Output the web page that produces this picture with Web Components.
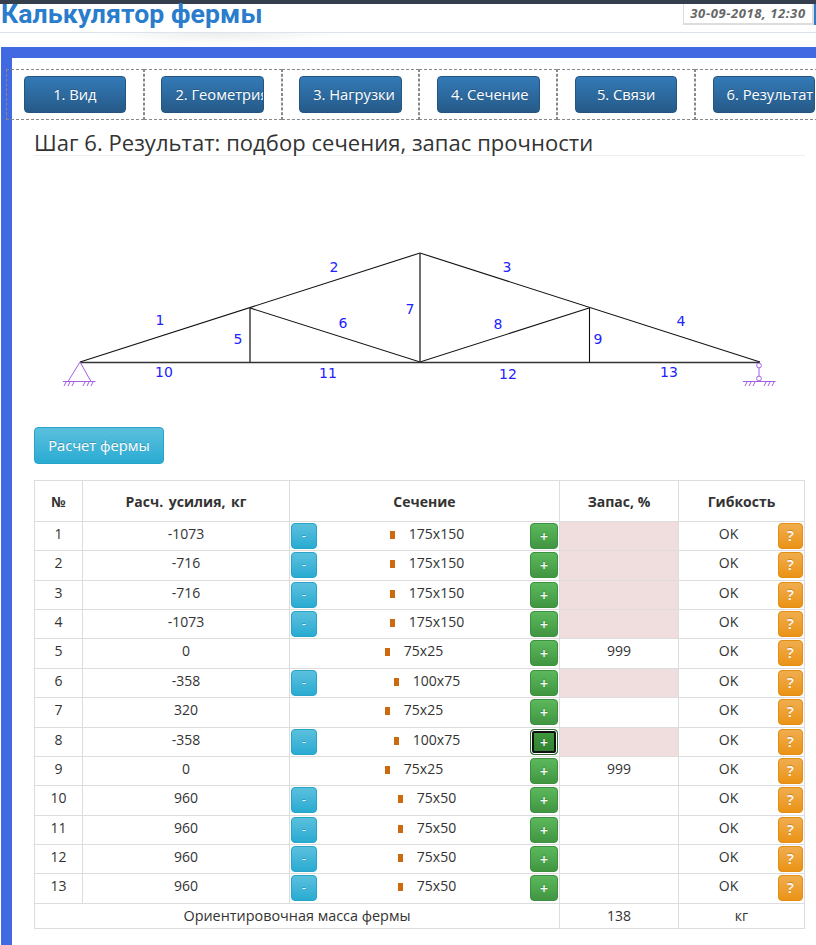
<!DOCTYPE html>
<html lang="ru"><head><meta charset="utf-8"><title>Калькулятор фермы</title>
<style>
html,body{margin:0;padding:0;background:#fff;overflow:hidden;width:816px;height:945px}
body{font-family:"Open Sans","Noto Sans",sans-serif;color:#333}
</style></head><body>
<app-header title-text="Калькулятор фермы" date="30-09-2018, 12:30"></app-header>
<work-frame>
  <step-tabs>
    <step-tab>1. Вид</step-tab><step-tab>2. Геометрия</step-tab><step-tab>3. Нагрузки</step-tab>
    <step-tab>4. Сечение</step-tab><step-tab>5. Связи</step-tab><step-tab>6. Результат</step-tab>
  </step-tabs>
  <step-title>Шаг 6. Результат: подбор сечения, запас прочности</step-title>
  <truss-diagram></truss-diagram>
  <app-btn kind="info" size="large">Расчет фермы</app-btn>
  <truss-table></truss-table>
</work-frame>
<script>
const FONT='"Open Sans","Noto Sans",sans-serif';
function def(name,css,html,extra){
  customElements.define(name,class extends HTMLElement{
    constructor(){super();this.attachShadow({mode:'open'}).innerHTML='<style>'+css+'</style>'+html;}
    connectedCallback(){if(extra)extra(this);}
  });
}
def('app-header',`
:host{display:block;height:47px;box-sizing:border-box;font-family:${FONT}}
.dark{height:4px;background:#353e4c}
.row{display:flex;justify-content:space-between;align-items:flex-start;height:28px;border-bottom:1px solid #dde3ea}
h1{margin:0 0 0 1px;font:700 26.6px/20px Roboto,sans-serif;letter-spacing:.1px;color:#2a7ccc;white-space:nowrap}
.date{box-sizing:border-box;height:21px;width:131px;margin:0 2px 0 0;border:1px solid #ddd;border-top:0;border-width:0 2px 2px 1px;font:italic 700 13px/18px ${FONT};letter-spacing:.6px;color:#666;text-align:center;box-shadow:2px 0 0 #2a7ccc}
.shade{height:14px;background:radial-gradient(ellipse 130px 12px at 220px 0,rgba(0,0,0,.07),rgba(0,0,0,0))}`,
`<div class="dark"></div><div class="row"><h1></h1><div class="date"></div></div><div class="shade"></div>`,
el=>{el.shadowRoot.querySelector('h1').textContent=el.getAttribute('title-text');el.shadowRoot.querySelector('.date').textContent=el.getAttribute('date');});
def('work-frame',`
:host{display:block;margin-left:1px;border-top:11px solid #4169e1;border-left:11px solid #4169e1;height:898px;padding-top:11px;box-sizing:border-box;font-family:${FONT}}`,`<slot></slot>`);
def('step-tabs',`
:host{display:flex;margin-left:-6px;width:830px;height:51px}`,`<slot></slot>`);
def('step-tab',`
:host{display:flex;flex:0 0 137.8px;box-sizing:border-box;border:1px dashed #888;padding:6px 0 0 16.6px}
.b{box-sizing:border-box;flex:none;width:102.6px;height:37px;border:1px solid #245580;border-radius:4px;background:linear-gradient(#337ab7,#265a88);color:#fff;font-size:14.7px;line-height:34px;padding:0 13px;text-align:center;white-space:nowrap;overflow:hidden;text-shadow:0 -1px 0 rgba(0,0,0,.2)}`,
`<div class="b"><slot></slot></div>`);
def('step-title',`
:host{display:block;margin:8px 0 0 22px;width:771px;box-sizing:border-box;border-bottom:1px solid #eee;height:28px;font-size:22px;line-height:28px;letter-spacing:.04px;color:#333;white-space:nowrap}`,`<slot></slot>`);
def('app-btn',`
:host{display:block;box-sizing:border-box;border:1px solid;border-radius:4px;color:#fff;text-align:center;white-space:nowrap;width:26px;height:26px;font-size:12px;line-height:24px;flex:none;text-shadow:0 -1px 0 rgba(0,0,0,.2)}
:host([kind=info]){background:linear-gradient(#5bc0de,#2aabd2);border-color:#28a4c9}
:host([kind=success]){background:linear-gradient(#5cb85c,#419641);border-color:#3e8f3e;width:28px;font-size:14px;line-height:25px;font-weight:600}
:host([kind=warning]){background:linear-gradient(#f0ad4e,#eb9316);border-color:#e38d13;width:25px;font-size:15px;font-weight:600;line-height:23px}
:host([size=large]){width:130px;height:37px;font-size:14.7px;line-height:34px;margin-left:22px}
:host([focused]){border-color:#2d6a2d;box-shadow:inset 0 0 0 1px #fff,inset 0 0 0 3px #111;background:linear-gradient(#3f9a3f,#2f7f2f)}`,`<slot></slot>`);
def('truss-diagram',`
:host{display:block;margin:0 0 0 22px;width:771px;height:271px}
svg{display:block}
text{font:14px "DejaVu Sans",sans-serif;fill:#2222ff;text-anchor:middle}`,
`<svg width="771" height="271" viewBox="34 156 771 271" aria-label="Схема фермы">
<g fill="none" stroke="#111" stroke-width="1.1">
<path d="M80 362 420 253 760 362"/><path d="M250 308 420 362 589 308"/>
</g>
<g fill="none" stroke="#333" stroke-width="1.4">
<path d="M80 362.5H760"/><path d="M250 308V362M420 253V362"/><path d="M589.5 308V362" stroke="#111" stroke-width="1.1"/>
</g>
<g fill="none" stroke="#a45ee8" stroke-width="1">
<path d="M80 362 68 381.5H91Z"/><path d="M63 381.5H95.5"/>
<path d="M66 382l-2 4M70 382l-2 4M74 382l-2 4M85 382l-2 4M89 382l-2 4M93 382l-2 4"/>
<circle cx="759" cy="365.5" r="2.4" fill="#fff"/><circle cx="759" cy="378.5" r="2.4" fill="#fff"/><path d="M759 368V376"/>
<path d="M743 381.5H775.5"/><path d="M747 382l-2 4M751 382l-2 4M755 382l-2 4M766 382l-2 4M770 382l-2 4M774 382l-2 4"/>
</g>
<text x="160" y="325">1</text><text x="334" y="272">2</text><text x="507" y="272">3</text><text x="681" y="326">4</text>
<text x="238" y="344">5</text><text x="343" y="328">6</text><text x="410" y="314">7</text><text x="498" y="329">8</text>
<text x="598" y="344">9</text><text x="164" y="377">10</text><text x="328" y="378">11</text><text x="508" y="379">12</text><text x="669" y="377">13</text>
</svg>`);
def('section-cell',`
:host{display:flex;align-items:flex-start;height:100%;box-sizing:border-box;padding:1px 1px 0 1px}
.c{flex:1;display:flex;justify-content:center;align-items:center;height:22px;gap:14px;padding-left:7px;box-sizing:border-box}
i{display:block;width:5px;height:8px;background:#cb6a0e;margin-top:1px}
.sp{width:26px;flex:none}`,
`<span class="sp"><slot name="minus"></slot></span><div class="c"><i></i><span><slot></slot></span></div><slot name="plus"></slot>`,
el=>{ if(!el.querySelector('[slot=minus]')){el.shadowRoot.querySelector('.sp').style.width='0';} });
const rows=[[1,-1073,'175x150',1,'r',''],[2,-716,'175x150',1,'r',''],[3,-716,'175x150',1,'r',''],[4,-1073,'175x150',1,'r',''],
[5,0,'75x25',0,'','999'],[6,-358,'100x75',1,'r',''],[7,320,'75x25',0,'',''],[8,-358,'100x75',1,'r','',1],[9,0,'75x25',0,'','999'],
[10,960,'75x50',1,'',''],[11,960,'75x50',1,'',''],[12,960,'75x50',1,'',''],[13,960,'75x50',1,'','']];
const hs=[29,30,29,29,30,29,30,29,29,30,29,29,30];
def('truss-table',`
:host{display:block;margin:16px 0 0 22px;width:770px;font-size:14px;color:#333}
table{border-collapse:collapse;table-layout:fixed;width:770px}
th,td{border:1px solid #ddd;padding:0;text-align:center;font-size:14px}
th{font-weight:700;height:40px;color:#333}
td{vertical-align:top;line-height:24px}
td.r{background:#f0dede}
.ok{display:flex;padding:1px 1px 0 0;box-sizing:border-box;line-height:22px}
.ok span{flex:1}
td.m{vertical-align:middle;line-height:22px}
td.long{font-size:14.4px}`,
`<table><colgroup><col style="width:48px"><col style="width:207px"><col style="width:270px"><col style="width:119px"><col style="width:126px"></colgroup>
<thead><tr><th>№</th><th style="word-spacing:2px">Расч. усилия, кг</th><th>Сечение</th><th>Запас, %</th><th>Гибкость</th></tr></thead>
<tbody>${rows.map((r,i)=>`<tr style="height:${hs[i]}px"><td>${r[0]}</td><td>${r[1]}</td><td><section-cell>${r[3]?'<app-btn slot="minus" kind="info">-</app-btn>':''}${r[2]}<app-btn slot="plus" kind="success" ${r[6]?'focused':''}>+</app-btn></section-cell></td><td class="${r[4]}">${r[5]}</td><td><div class="ok"><span>OK</span><app-btn kind="warning">?</app-btn></div></td></tr>`).join('')}
<tr style="height:25px"><td class="m long" colspan="3">Ориентировочная масса фермы</td><td class="m">138</td><td class="m">кг</td></tr></tbody></table>`);
</script>
</body></html>
